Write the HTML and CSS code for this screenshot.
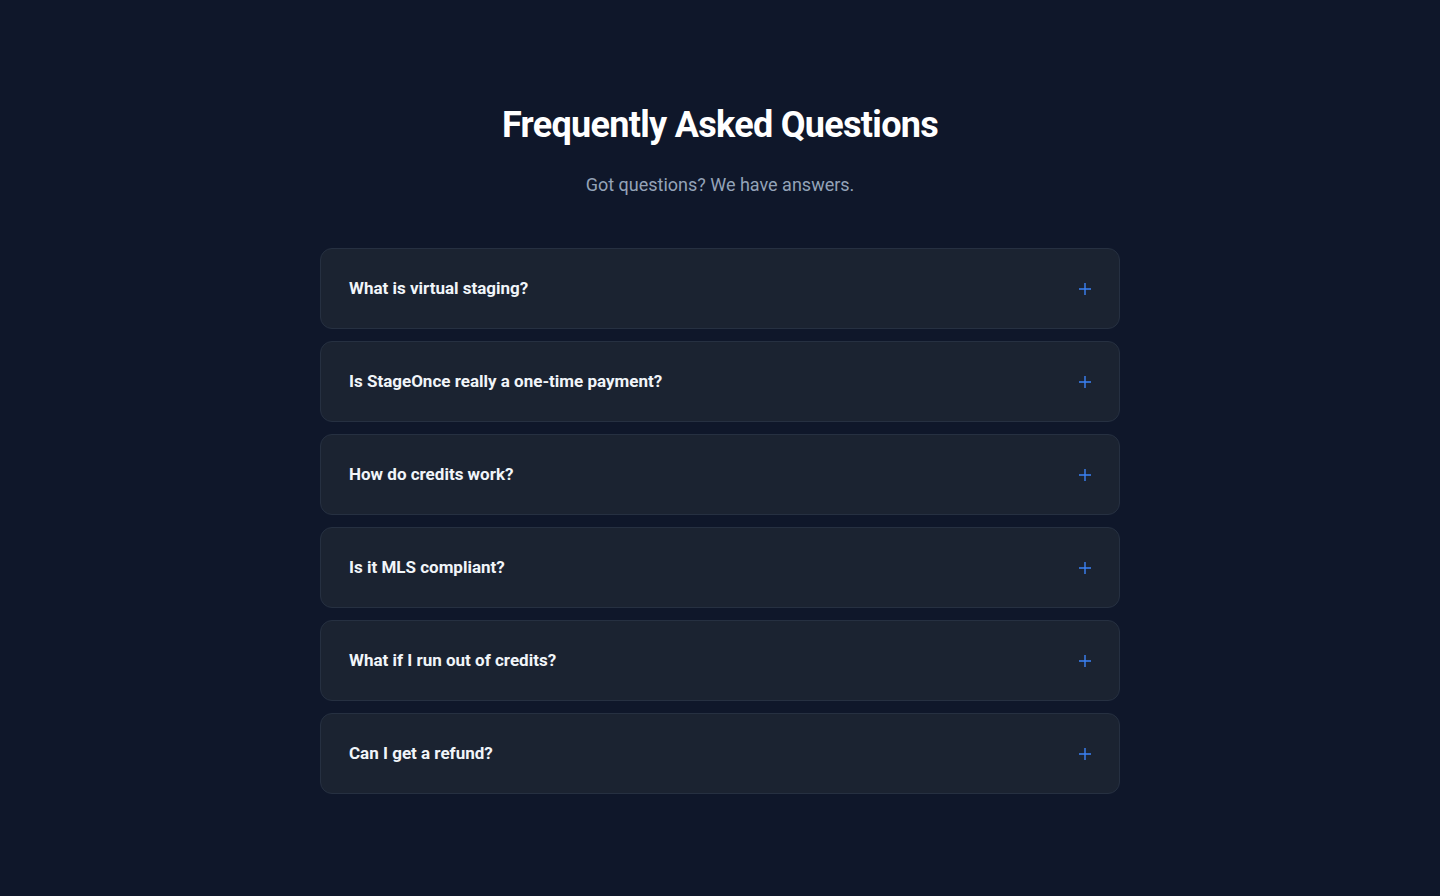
FILE: index.html
```html
<!DOCTYPE html>
<html lang="en">
<head>
<meta charset="UTF-8">
<meta name="viewport" content="width=device-width, initial-scale=1.0">
<title>FAQ</title>
<link rel="stylesheet" href="styles.css">
</head>
<body>

<section class="faq">
  <h2>Frequently Asked Questions</h2>
  <p class="subtitle">Got questions? We have answers.</p>

  <div class="faq-list">
    <div class="faq-item">
      <span class="question">What is virtual staging?</span>
      <svg class="plus" width="16" height="16" viewBox="0 0 16 16"><path d="M8 2v12M2 8h12"/></svg>
    </div>
    <div class="faq-item">
      <span class="question">Is StageOnce really a one-time payment?</span>
      <svg class="plus" width="16" height="16" viewBox="0 0 16 16"><path d="M8 2v12M2 8h12"/></svg>
    </div>
    <div class="faq-item">
      <span class="question">How do credits work?</span>
      <svg class="plus" width="16" height="16" viewBox="0 0 16 16"><path d="M8 2v12M2 8h12"/></svg>
    </div>
    <div class="faq-item">
      <span class="question">Is it MLS compliant?</span>
      <svg class="plus" width="16" height="16" viewBox="0 0 16 16"><path d="M8 2v12M2 8h12"/></svg>
    </div>
    <div class="faq-item">
      <span class="question">What if I run out of credits?</span>
      <svg class="plus" width="16" height="16" viewBox="0 0 16 16"><path d="M8 2v12M2 8h12"/></svg>
    </div>
    <div class="faq-item">
      <span class="question">Can I get a refund?</span>
      <svg class="plus" width="16" height="16" viewBox="0 0 16 16"><path d="M8 2v12M2 8h12"/></svg>
    </div>
  </div>
</section>

</body>
</html>
```

FILE: styles.css
```css
body {
  font-family: Roboto, "Liberation Sans", sans-serif;
  margin: 0;
  padding: 0;
  min-height: 100vh;
  background-color: #0f172a;
  color: #fff;
}

.faq {
  max-width: 800px;
  margin: 0 auto;
  padding: 105px 0 80px;
}

h2 {
  margin: 0;
  text-align: center;
  font-size: 36px;
  line-height: 40px;
  font-weight: 700;
  letter-spacing: -0.7px;
  color: #fff;
}

.subtitle {
  margin: 26px 0 0;
  text-align: center;
  font-size: 18px;
  line-height: 28px;
  color: #94a3b8;
}

.faq-list {
  margin-top: 49px;
  display: flex;
  flex-direction: column;
  gap: 12px;
}

.faq-item {
  display: flex;
  align-items: center;
  justify-content: space-between;
  padding: 28px;
  background-color: #1b2331;
  border: 1px solid #263041;
  border-radius: 12px;
  cursor: pointer;
}

.question {
  font-size: 17px;
  line-height: 23px;
  font-weight: 700;
  color: #f1f5f9;
}

.plus {
  fill: none;
  stroke: #3b82f6;
  stroke-width: 1.4;
  margin-right: -2px;
}
```
